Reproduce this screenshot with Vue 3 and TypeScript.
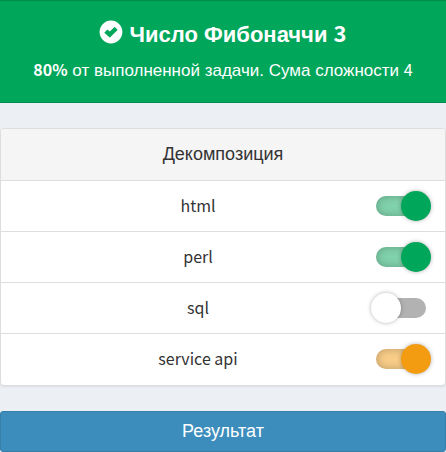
<script setup lang="ts">
import { reactive } from 'vue'

interface Task {
  id: string
  name: string
  done: boolean
  tone: 'success' | 'warning'
}

const tasks = reactive<Task[]>([
  { id: 'task-html', name: 'html', done: true, tone: 'success' },
  { id: 'task-perl', name: 'perl', done: true, tone: 'success' },
  { id: 'task-sql', name: 'sql', done: false, tone: 'success' },
  { id: 'task-api', name: 'service api', done: true, tone: 'warning' },
])
</script>

<template>
  <main class="page">
    <header class="banner">
      <h1 class="title">
        <svg class="ok" viewBox="0 0 24 24" aria-hidden="true">
          <path
            fill="#fff"
            fill-rule="evenodd"
            d="M12 .6a11.4 11.4 0 1 0 0 22.800a11.400 11.400 0 1 0 0-22.800ZM5.600 12.300L8.100 9.800Q8.500 9.500 8.900 9.800L10.800 11.600L15.200 7.200Q15.600 6.900 16 7.200L18.300 9.500Q18.600 9.900 18.300 10.300L11.200 17.300Q10.800 17.700 10.400 17.300L5.600 13.100Q5.300 12.700 5.600 12.300Z"
          />
        </svg>
        Число Фибоначчи <span class="latin">3</span>
      </h1>
      <p class="summary">
        <b class="latin">80%</b> от выполненной задачи. Сума сложности <span class="latin">4</span>
      </p>
    </header>

    <section class="panel">
      <h2 class="panel-title">Декомпозиция</h2>
      <ul class="list">
        <li v-for="task in tasks" :key="task.id" class="row">
          <label class="name" :for="task.id">{{ task.name }}</label>
          <input :id="task.id" v-model="task.done" type="checkbox" class="switch" :class="task.tone" />
        </li>
      </ul>
    </section>

    <button type="button" class="result">Результат</button>
  </main>
</template>

<style>
body {
  background: #ecf0f5;
}
</style>

<style scoped>
.page {
  display: flex;
  flex-direction: column;
  gap: 25px;
  font-family: "Liberation Sans", Arial, sans-serif;
  font-size: 18px;
  line-height: 26px;
  color: #333;
  text-align: center;
}

.latin,
.name {
  font-family: "Noto Sans CJK SC", sans-serif;
  font-size: 16px;
}

.banner {
  padding: 17px 15px 18px;
  border: solid #008d4c;
  border-width: 1px 0;
  background: #00a65a;
  color: #fff;
}

.title {
  margin: 0 0 6px;
  font-size: 22px;
  line-height: 34px;
  font-weight: 700;
}

.title .latin {
  font-size: 22px;
  line-height: 1;
}

.ok {
  width: 24px;
  height: 24px;
  vertical-align: -2px;
}

.summary {
  margin: 0;
  font-size: 17px;
}

.summary .latin {
  line-height: 1;
}

.panel {
  border: 1px solid #ddd;
  border-radius: 4px;
  background: #fff;
  box-shadow: 0 1px 2px rgba(0, 0, 0, 0.08);
}

.panel-title {
  margin: 0;
  padding: 12px 19px 13px;
  border-radius: 3px 3px 0 0;
  background: #f5f5f5;
  font-size: 18px;
  font-weight: 400;
}

.list {
  margin: 0;
  padding: 0 0 1px;
  list-style: none;
}

.row {
  display: flex;
  align-items: center;
  padding: 10px 19px;
  border-top: 1px solid #ddd;
}

.name {
  flex: 1;
  padding-bottom: 2px;
  line-height: 28px;
}

.switch {
  appearance: none;
  position: relative;
  width: 50px;
  height: 20px;
  margin: 0;
  border-radius: 10px;
  background: #b2b2b2;
  cursor: pointer;
}

.switch::after {
  content: "";
  position: absolute;
  top: -5px;
  left: -5px;
  width: 30px;
  height: 30px;
  border-radius: 50%;
  background: #fff;
  box-shadow: 0 0 4px rgba(0, 0, 0, 0.3);
}

.switch:checked {
  box-shadow: inset 0 0 8px rgba(0, 0, 0, 0.25);
}

.switch:checked::after {
  left: 25px;
}

.success:checked {
  background: #80d2ac;
}

.success:checked::after {
  background: #00a65a;
}

.warning:checked {
  background: #f9cd88;
}

.warning:checked::after {
  background: #f39c12;
}

.result {
  padding: 6px 16px 7px;
  border: 1px solid #367fa9;
  border-radius: 3px;
  background: #3c8dbc;
  color: #fff;
  font: inherit;
  cursor: pointer;
}
</style>
